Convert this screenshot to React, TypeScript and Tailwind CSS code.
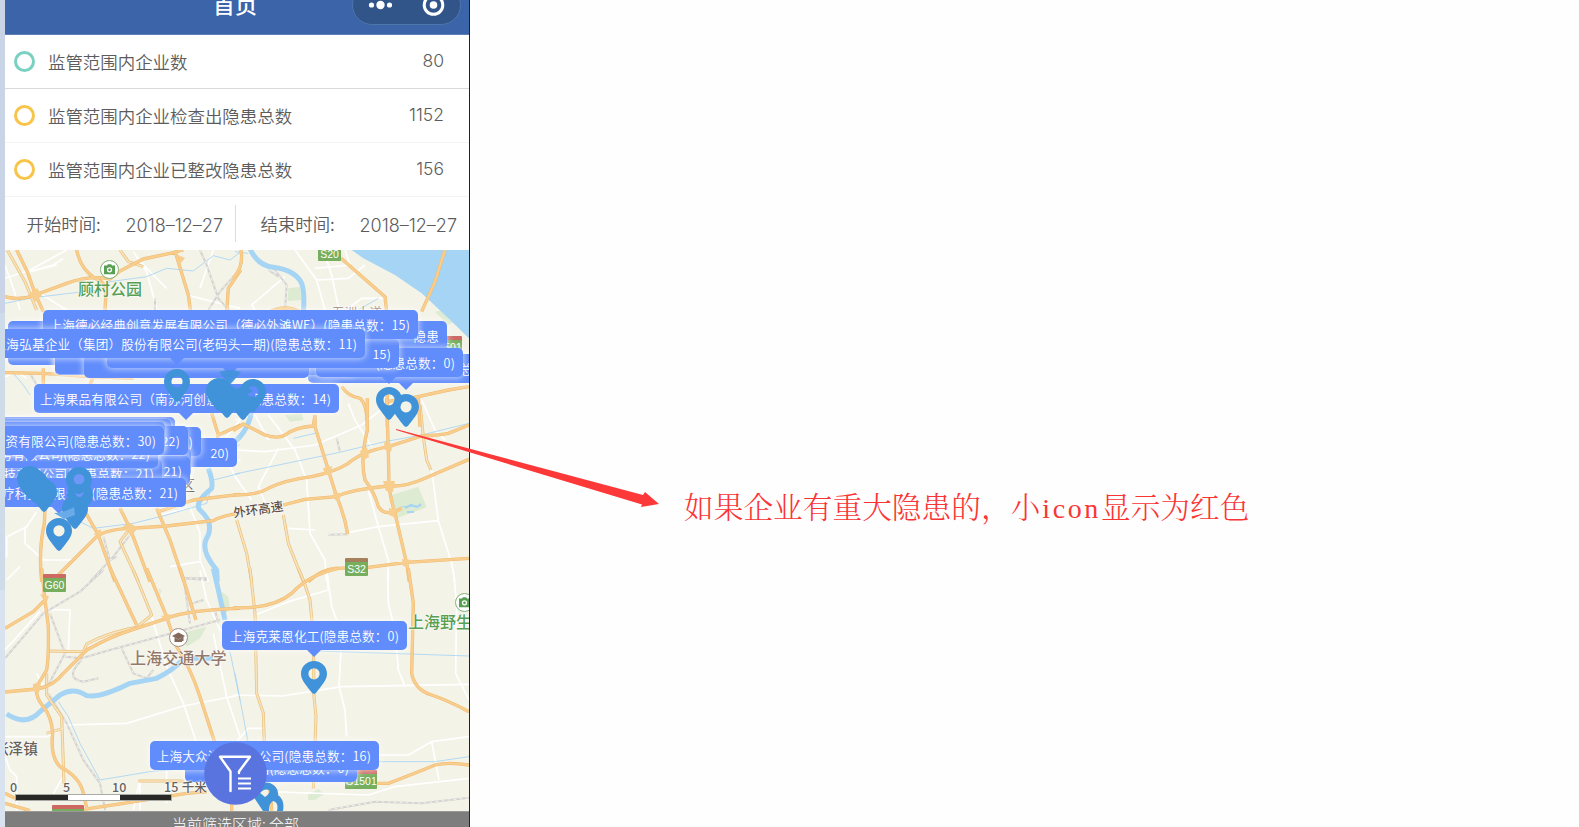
import type { ReactNode } from "react";

const ORANGE = "#f8ce8e";
const ORANGE_EDGE = "#f1b96f";
const WATER = "#a5d4f4";

type Tile = {
  origin: string;
  sea?: string;
  green?: string;
  white: string;
  blue: string;
  rail: string;
  pale?: string;
  river?: string;
  roads: string;
};

/* Road network, split in tiles drawn at three units per pixel. */
const tiles: Tile[] = [
  {
    origin: "translate(-5 -5) scale(.33333)",
    white:
      "M200 15L90 75L15 100M170 60L90 80L160 60L190 40M400 20L440 80L470 190M330 95L420 50L500 130M15 60L40 130L60 195M560 150L720 190M15 395L50 380L80 400M600 130L640 15M120 145L200 195",
    blue: "M15 175L100 158L200 146L290 136L330 110L440 95L500 70L580 78L640 32L690 45L720 22M40 385L70 420L90 450",
    rail: "M600 15L620 60L655 160L690 200M700 95L660 140L625 195M90 385L110 420M465 160L465 195",
    pale: "M22 15L75 110L110 195M360 15L385 50L430 65",
    roads:
      "M50 15L82 80L105 145L130 200M15 155Q60 168 105 150L200 115Q270 90 330 102L360 78L430 42L510 25L550 15M230 15Q240 70 285 100Q320 115 318 140L315 200M525 18Q550 100 565 150L572 200M722 75L685 130L680 200M15 383L130 385L270 395L400 400M130 370V420M280 395L270 420",
  },
  {
    origin: "translate(230 -5) scale(.33333)",
    sea: "M350 15L385 40L480 90L560 145L630 210L704 282V15Z",
    green: "M160 130L195 125L200 165L158 168ZM600 200L625 195L655 230L640 240Z",
    white:
      "M180 15L245 105L270 195M265 15L290 90L312 195M245 105L340 100L390 60M150 95L50 180L60 195M330 15L345 60L240 70M340 190L380 160L450 160",
    blue: "M0 20L40 25M370 195L430 160",
    rail: "M60 40L120 75L155 120L150 195M100 75L130 95",
    river: "M45 10Q65 60 115 67Q180 75 200 115Q210 145 205 200",
    roads:
      "M18 15C25 60 10 80 -5 100M318 40L450 155L455 200M630 15L600 110L560 200M105 200Q150 178 195 200M320 425Q340 455 375 460Q397 480 397 545M457 430V545M455 470L550 455L640 435L702 425M550 455L555 545",
  },
  {
    origin: "translate(-5 150) scale(.33333)",
    white:
      "M20 470V410L80 380L110 335M75 380L75 430L130 480L220 480M570 320L600 400L600 480L625 545M600 200L720 180M480 345L560 325M720 60L640 160L590 200M660 110L700 220L720 250M20 540L60 500M510 500L600 485",
    blue: "M170 330L280 385L400 370L500 345L620 310L640 240L720 220M650 150L720 135",
    rail: "M390 405L340 470L270 545M310 410L330 480L350 470M550 535L620 540",
    pale: "M390 385L360 425L415 545",
    river: "M625 205Q640 245 635 265Q580 310 600 330Q645 370 620 415Q600 450 650 510L652 545M720 110L690 140",
    roads:
      "M135 325L133 370Q115 450 125 545M175 525L290 410Q320 388 390 385L500 378L640 362Q670 345 720 340M255 335L295 405L345 545M360 325L390 385L450 545M470 325L510 420L552 545M475 335L580 300L720 283M635 40L655 105L722 75M655 105L640 180",
  },
  {
    origin: "translate(230 150) scale(.33333)",
    green: "M470 285L550 260L575 322L485 355ZM150 45L200 40L205 60L165 65Z",
    white:
      "M0 150L90 155L240 135L380 75L450 20M340 10L360 60L410 140M100 45L180 150L215 240L225 400L270 480L275 545M0 230L50 300M130 145L70 260L95 320M400 270L430 380L460 480L460 545M160 385L240 390M338 398L430 380L610 362L650 490L660 545M590 210L610 362M560 0L600 90L630 120M0 60L60 45L100 120",
    blue: "M0 222L300 160L450 125L560 105L702 70M175 115L240 100M500 320L560 318",
    rail: "M305 115L315 155M280 404L340 403",
    pale: "M555 15L565 110L575 180L588 210M145 345L160 430L205 545M5 360L35 460L50 545",
    river: "M55 -5Q50 80 5 120",
    roads:
      "M-5 92L25 72L90 105Q130 118 150 105Q180 82 235 78L240 45M240 45V80L280 210L305 290Q330 350 338 402M-5 284Q60 288 100 265Q150 240 230 230Q300 215 340 190Q380 155 460 140L560 108Q620 105 640 100L702 75M397 -5V90Q375 180 390 240Q420 280 430 320Q445 345 480 335L500 325M455 -5L460 150L462 260Q470 310 480 340L515 490L523 545M145 315L210 298L305 290Q340 270 460 258Q510 262 570 235L702 178M220 545Q260 508 300 505L400 502L515 487L702 475",
  },
  {
    origin: "translate(-5 320) scale(.33333)",
    green: "M545 190L620 170L600 205L560 230ZM665 65L685 80L690 115L670 140ZM475 55L485 60L480 75Z",
    white:
      "M195 465L380 460L550 408L720 375M15 500H140L190 475M455 140L500 290L550 400L590 520M640 190L680 380L720 500M130 118L210 120L205 240M15 240L120 125M15 560L30 600L50 620V720M500 600V700M420 630V720M600 0L620 90L660 180L720 200M110 310L130 350L100 360M400 720L420 630M150 690L200 600",
    blue: "M175 395L205 440L240 520L300 630L450 605M690 245L720 390M450 605L560 595",
    rail: "M310 0L240 65L130 130L15 265M150 130L195 250L145 345M195 260L245 265L330 240L570 175L660 150M245 270Q190 325 250 335L295 325M365 235L400 310L440 325L460 300M145 370L200 460L250 570L300 640L315 720M550 20L570 160M550 25H620M560 105L610 90M645 120L655 160",
    pale: "M140 310V375L185 440L192 640M145 243L250 245L260 222Q330 185 410 172L455 135L400 0M140 490L190 475M415 633H550",
    river: "M640 -5L655 60L675 150M20 432Q80 470 120 425L180 375Q220 350 260 377Q300 385 390 340L470 325Q520 300 545 272L580 265H640",
    roads:
      "M125 -5L135 90L145 170Q147 260 140 300L110 350Q105 380 130 410Q155 440 158 490Q150 560 180 590Q240 620 250 670L262 722M15 175L100 125L135 90M330 -5L410 165M440 -5L500 140L530 230Q570 290 600 380L645 520M540 -5L588 150M15 366L110 357Q160 350 190 310L260 240Q330 200 400 178L500 145Q560 120 720 115M225 722L370 700L560 670L620 665M15 670L45 685M15 700L90 722M695 600V722",
  },
  {
    origin: "translate(230 320) scale(.33333)",
    green: "M218 675L250 657L267 672L240 690H220Z",
    white:
      "M60 135L160 95L280 60L275 0L290 110L305 150M-5 375L140 378L320 350L702 343M318 240L312 350L330 420L335 500M458 0L460 100L480 180L490 300L510 350M655 0L665 100L662 310L702 390M430 555L520 555L590 515L702 500M590 515L612 630M100 665L400 675L480 650L702 625M0 520L40 475L90 475",
    blue: "M220 242L702 258M430 575L600 575L702 560M0 310L40 520",
    rail: "M280 720L420 695L560 700L702 683",
    pale: "M45 -5L60 130L65 370L85 430L88 520M190 -5L205 30L225 90L235 200L237 380L243 440L235 655",
    roads:
      "M-5 113Q110 118 170 70Q220 15 310 -5M520 -5L535 100L530 310Q540 360 590 375Q640 392 702 425M425 640H460Q540 610 600 585Q640 575 702 585M0 665L80 640M105 660L110 722",
  },
];

function Roads() {
  return (
    <svg className="absolute inset-0 h-full w-full" viewBox="0 0 464 561" fill="none" strokeLinejoin="round">
      <rect width="464" height="562" fill="#f4f3e8" />
      {tiles.map((t) => (
        <g key={t.origin} transform={t.origin}>
          {t.green && <path d={t.green} fill="#dcebd2" />}
          {t.sea && <path d={t.sea} fill={WATER} />}
          <path d={t.white} stroke="#fff" strokeWidth="5" />
          <path d={t.blue} stroke={WATER} strokeWidth="2.5" />
          <path d={t.rail} stroke="#d3d2d0" strokeWidth="6" />
          <path d={t.rail} stroke="#f1f0ea" strokeWidth="3" strokeDasharray="9 9" />
          {t.river && <path d={t.river} stroke={WATER} strokeWidth="15" />}
          {t.pale && <path d={t.pale} stroke="#eabf78" strokeWidth="9" />}
          {t.pale && <path d={t.pale} stroke="#f7e3bd" strokeWidth="5" />}
        </g>
      ))}
      {tiles.map((t) => (
        <g key={t.origin} transform={t.origin}>
          <path d={t.roads} stroke={ORANGE_EDGE} strokeWidth="10" />
          <path d={t.roads} stroke={ORANGE} strokeWidth="7" />
        </g>
      ))}
      <g fill={ORANGE}>
        <path d="M24 44L32 38L37 45L31 52ZM118 276L125 273L133 278L126 286ZM36 190L45 193L41 203ZM88 285L95 279L98 284ZM379 192L388 194L386 202L380 200ZM355 201L362 197L364 207L357 211ZM318 218L327 216L326 225L320 225ZM378 231L390 231L388 242L381 241ZM328 243L337 243L334 251L330 250ZM397 309L406 310L403 317L398 316ZM384 258L391 260L389 267L384 265ZM35 344L44 346L41 354ZM28 434L36 432L34 443L28 441ZM156 366L165 364L164 373ZM180 8L173 5L175 14Z" />
      </g>
      <path d="M400 258l6-3 6 2 4-3M402 262h7" stroke={WATER} strokeWidth="2" />
    </svg>
  );
}

function Shield({ pos, size, top, children }: { pos: string; size: string; top: string; children?: ReactNode }) {
  return (
    <div className={`absolute flex flex-col overflow-hidden rounded-[1px] ${pos} ${size}`}>
      <div className={`h-[4px] shrink-0 ${top}`} />
      <div className="flex flex-1 items-center justify-center bg-[#76ae5d] font-['Liberation_Sans',sans-serif] text-[10.5px] leading-none text-white">
        {children}
      </div>
    </div>
  );
}

function Label({ pos, tail, children }: { pos: string; tail?: string; children?: ReactNode }) {
  return (
    <div
      className={`absolute flex h-[29px] items-center justify-end rounded-[5px] bg-[#618cfb] pt-px pr-[8px] text-[12.6px] leading-none font-[350] tracking-[0.17px] whitespace-nowrap text-white shadow-[0_0_6px_1px_rgba(255,255,255,0.6)] ${pos}`}
    >
      {children}
      {tail && (
        <div className={`absolute top-[29px] h-0 w-0 border-x-[7px] border-t-[7px] border-x-transparent border-t-[#618cfb] ${tail}`} />
      )}
    </div>
  );
}

function Pin({ pos, solid = false }: { pos: string; solid?: boolean }) {
  return (
    <svg className={`absolute h-[33px] w-[26px] ${pos}`} viewBox="0 0 26 33" fill="#4093d8">
      <path
        fillRule="evenodd"
        d={
          "M13 0C5.8 0 0 5.6 0 12.8C0 20 6.5 25.5 10.9 31.8Q13 34 15.1 31.8C19.5 25.5 26 20 26 12.8C26 5.6 20.2 0 13 0Z" +
          (solid ? "" : "M13 7.2A5.6 5.6 0 1 1 13 18.4A5.6 5.6 0 1 1 13 7.2Z")
        }
      />
    </svg>
  );
}

function ParkIcon({ pos }: { pos: string }) {
  return (
    <svg className={`absolute h-[19px] w-[19px] ${pos}`} viewBox="0 0 19 19">
      <circle cx="9.5" cy="9.5" r="9" fill="#fff" stroke="#7fb275" />
      <path d="M4 5.500h3l.8-1.300h3.400l.8 1.300h3v8.800H4z" fill="#59a055" />
      <circle cx="9.5" cy="9.8" r="2" fill="#59a055" stroke="#fff" strokeWidth="1.3" />
    </svg>
  );
}

function MapText({ className, children }: { className: string; children: ReactNode }) {
  return (
    <div
      className={`absolute leading-none whitespace-nowrap [text-shadow:0_0_2px_#fff,0_0_2px_#fff,0_0_1px_#fff] ${className}`}
    >
      {children}
    </div>
  );
}

function CityMap() {
  return (
    <div className="relative h-[561px] overflow-hidden">
      <Roads />
      <ParkIcon pos="left-[95px] top-[10px]" />
      <MapText className="left-[73px] top-[30px] text-[16px] font-medium text-[#57a052]">顾村公园</MapText>
      <MapText className="left-[327px] top-[56px] text-[12.5px] text-[#95806f]">五洲大道</MapText>
      <MapText className="left-[175px] top-[227px] text-[15px] text-[#6b6560]">区</MapText>
      <MapText className="left-[228px] top-[253px] -rotate-[8deg] text-[12.6px] font-medium text-[#5d5048]">外环高速</MapText>
      <MapText className="left-[125px] top-[399px] text-[16.1px] font-medium text-[#93796a]">上海交通大学</MapText>
      <MapText className="-left-[11px] top-[491px] text-[14.6px] font-medium text-[#65615b]">张泽镇</MapText>
      <MapText className="left-[403px] top-[363px] text-[16px] font-medium text-[#57a052]">上海野生</MapText>
      <ParkIcon pos="left-[450px] top-[343px]" />
      <svg className="absolute left-[164px] top-[378px] h-[19px] w-[19px]" viewBox="0 0 19 19">
        <circle cx="9.5" cy="9.5" r="9" fill="#fff" stroke="#a09088" />
        <path d="M3 8l6.500-3.500L16 8l-1.500.8V13H13V9.600l-3.500 1.800z" fill="#84695b" />
        <path d="M5.500 9.500l4 2 3.500-1.800V14h-7.500z" fill="#84695b" />
      </svg>

      <Shield pos="left-[313px] -top-[7px]" size="h-[18px] w-[23px]" top="bg-[#cd6962]">S20</Shield>
      <Shield pos="left-[425px] top-[86px]" size="h-[18px] w-[32px]" top="bg-[#cd6962]">G1501</Shield>
      <Shield pos="left-[340px] top-[308px]" size="h-[18px] w-[23px]" top="bg-[#a4805d]">S32</Shield>
      <Shield pos="left-[38px] top-[324px]" size="h-[18px] w-[23px]" top="bg-[#cd6962]">G60</Shield>
      <Shield pos="left-[340px] top-[520px]" size="h-[19px] w-[32px]" top="bg-[#cd6962]">G1501</Shield>
      <Shield pos="left-[47px] top-[555px]" size="h-[18px] w-[32px]" top="bg-[#cd6962]" />

      {/* Northern cluster */}
      <Label pos="left-[3px] top-[71px] w-[439px]" tail="left-[20px]">隐患</Label>
      <Label pos="left-[3px] top-[86px] w-[200px]" />
      <Label pos="left-[303px] top-[104px] w-[185px]" tail="left-[91px]">总数</Label>
      <Label pos="left-[50px] top-[96px] w-[300px]" />
      <Label pos="left-[50px] top-[95px] w-[250px]" />
      <Label pos="left-[79px] top-[99px] w-[225px]" tail="left-[137px]" />
      <Label pos="left-[311px] top-[98px] w-[147px]" tail="left-[66px]">(隐患总数：0)</Label>
      <Label pos="left-[102px] top-[89px] w-[292px]" tail="left-[116px]">15)</Label>
      <Label pos="left-[38px] top-[60px] w-[375px]">上海德必经典创意发展有限公司（德必外滩WE）(隐患总数：15)</Label>
      <Label pos="-left-[30px] top-[79px] w-[390px]" tail="left-[195px]">上海弘基企业（集团）股份有限公司(老码头一期)(隐患总数：11)</Label>
      <Label pos="left-[29px] top-[134px] w-[305px]" tail="left-[145px]">上海果品有限公司（南苏河创意园）(隐患总数：14)</Label>
      <svg className="absolute left-[213px] top-[119px] h-[16px] w-[24px]" viewBox="0 0 24 16">
        <path d="M1 3Q12 -1 23 3L12 16Z" fill="#4093d8" fillOpacity=".85" />
      </svg>
      <Pin pos="left-[159px] top-[119px]" />
      <Pin pos="left-[201px] top-[128px]" solid />
      <Pin pos="left-[235px] top-[129px]" />
      <Pin pos="left-[209px] top-[135px]" solid />
      <Pin pos="left-[225px] top-[137px]" solid />
      <svg className="absolute left-[239px] top-[135px] h-[14px] w-[14px]" viewBox="0 0 14 14">
        <path d="M4 8Q9 8 11 3Q13.500 11 8 12Q4 12 4 8Z" fill="#618cfb" />
      </svg>
      <Pin pos="left-[371px] top-[137px]" />
      <Pin pos="left-[388px] top-[144px]" />

      {/* Western cluster */}
      <Label pos="left-[80px] top-[188px] w-[152px]">20)</Label>
      <Label pos="left-[40px] top-[177px] w-[156px]">)</Label>
      <Label pos="-left-[30px] top-[167px] w-[200px]" />
      <Label pos="-left-[30px] top-[169px] w-[196px]" />
      <Label pos="-left-[30px] top-[198px] w-[216px]" />
      <Label pos="-left-[30px] top-[206px] w-[215px]">21)</Label>
      <Label pos="-left-[30px] top-[209px] w-[187px]">环保科技有限公司(隐患总数：21)</Label>
      <Label pos="-left-[30px] top-[189px] w-[183px]" tail="left-[97px]">劳务有限公司(隐患总数：22)</Label>
      <Label pos="-left-[30px] top-[176px] w-[213px]">22)</Label>
      <Label pos="-left-[30px] top-[172px] w-[190px]" />
      <Label pos="-left-[30px] top-[176px] w-[189px]" tail="left-[48px]">资有限公司(隐患总数：30)</Label>
      <Label pos="-left-[30px] top-[228px] w-[211px]" tail="left-[77px]">医疗科技有限公司(隐患总数：21)</Label>
      <Pin pos="left-[12px] top-[216px]" solid />
      <Pin pos="left-[17px] top-[220px]" solid />
      <Pin pos="left-[26px] top-[229px]" solid />
      <Pin pos="left-[57px] top-[246px]" solid />
      <Pin pos="left-[62px] top-[232px]" solid />
      <Pin pos="left-[61px] top-[217px]" solid />
      <svg className="absolute left-[68px] top-[224px] h-[24px] w-[12px]" viewBox="0 0 12 24" fill="#6f97f8">
        <path d="M.5 5.500A5.500 5.500 0 0 1 11.500 5.500Q11 9 8 10Q4 11 2 9ZM2 19Q8 22 11 17Q10 23 6 23Q3 22 2 19Z" />
      </svg>
      <svg className="absolute left-[49px] top-[257px] h-[14px] w-[22px]" viewBox="0 0 22 14">
        <path d="M0 6Q10 6 20 0L21 8L10 12Z" fill="#69abe9" />
      </svg>
      <Pin pos="left-[41px] top-[268px]" />

      {/* Southern markers */}
      <Label pos="left-[217px] top-[371px] w-[185px]" tail="left-[85px]">上海克莱恩化工(隐患总数：0)</Label>
      <Pin pos="left-[296px] top-[411px]" />
      <Label pos="left-[180px] top-[503px] w-[172px]">上海金山(隐患总数：0)</Label>
      <Label pos="left-[145px] top-[491px] w-[229px]">上海大众汽车有限公司(隐患总数：16)</Label>
      <svg className="absolute left-[246px] top-[530px] h-[31px] w-[36px]" viewBox="0 0 36 31">
        <path d="M6 6Q12 1 19 3Q28 7 27 15Q34 20 32 31H26Q28 22 22 21Q18 23 18 31H12L2 16L8 12L14 17Q20 13 18 10Q13 8 9 13Z" fill="#4093d8" />
      </svg>

      {/* Scale */}
      <div className="absolute left-[10px] top-[532px] text-[12.5px] leading-none font-medium tracking-[0.2px] text-[#64625e]">
        <MapText className="-left-[5px] -top-px">0</MapText>
        <MapText className="left-[48px] -top-px">5</MapText>
        <MapText className="left-[97px] -top-px">10</MapText>
        <MapText className="left-[149px] -top-px">15 千米</MapText>
      </div>
      <div className="absolute left-[10px] top-[544px] flex h-[7px] w-[157px] border border-[#a9a9a6] bg-white">
        <div className="w-[52px] bg-[#282827]" />
        <div className="w-[52px] bg-white" />
        <div className="flex-1 bg-[#282827]" />
      </div>

      {/* Filter button */}
      <svg className="absolute left-[199px] top-[492px] h-[63px] w-[63px]" viewBox="0 0 63 63" fill="none">
        <circle cx="31.500" cy="31.500" r="31.300" fill="#5a74df" />
        <g stroke="#fff" strokeWidth="2.400" strokeLinecap="round" strokeLinejoin="round">
          <path d="M26.500 49V29.500L16 14.800H46L35 29.500V31" />
          <path d="M34 36.500H47M34 41.500H47M34 46.500H47" strokeLinecap="butt" strokeWidth="2.200" />
        </g>
      </svg>
    </div>
  );
}

function StatRow({ ring, label, value, line }: { ring: string; label: string; value: string; line: string }) {
  return (
    <div className={`flex h-[54px] items-center border-b pr-[25px] pl-[9px] ${line}`}>
      <span className={`h-[21px] w-[21px] rounded-full border-[3.5px] ${ring}`} />
      <span className="ml-[13px] flex-1 pt-px text-[17.45px]">{label}</span>
      <span className="font-['Inter',sans-serif] text-[17.5px]">{value}</span>
    </div>
  );
}

function DateField({ label, value, inset }: { label: string; value: string; inset: string }) {
  return (
    <div className={`flex h-full items-center justify-end ${inset}`}>
      <span className="w-[99px] pt-px text-[17.4px]">{label}</span>
      <span className="mt-[4px] font-['Inter',sans-serif] text-[18px]">{value}</span>
    </div>
  );
}

export default function App() {
  return (
    <div className="flex h-[827px] w-full overflow-hidden bg-[#fefefe] font-['Noto_Sans_CJK_SC',sans-serif]">
      <div className="flex w-[5px] flex-col">
        <div className="h-[313px] bg-[#cad4e7]" />
        <div className="h-[277px] bg-[#cedbe9]" />
        <div className="flex-1 bg-[#d9e3f0]" />
      </div>

      <div className="flex w-[465px] flex-col border-r border-[#222]">
        <header className="relative flex h-[35px] shrink-0 justify-center overflow-hidden border-b border-[#5c7fb8] bg-[#3b64a9]">
          <h1 className="-mt-[8px] pr-[4px] text-[22px] leading-[22px] font-medium text-white">首页</h1>
          <svg className="absolute -top-[15px] right-[8px] h-[40px] w-[109px]" viewBox="0 0 109 40">
            <rect x=".5" y=".5" width="108" height="39" rx="19.500" fill="#315589" stroke="#4f75ad" />
            <g fill="#fff">
              <circle cx="19.500" cy="20" r="2.600" />
              <circle cx="28.500" cy="20" r="4.200" />
              <circle cx="37.500" cy="20" r="2.600" />
              <circle cx="81.500" cy="20" r="3.800" />
            </g>
            <circle cx="81.500" cy="20" r="9.300" fill="none" stroke="#fff" strokeWidth="3" />
          </svg>
        </header>

        <section className="shrink-0 bg-white font-[350] text-[#5c5c5c]">
          <StatRow ring="border-[#7bd1c1]" label="监管范围内企业数" value="80" line="border-[#d9d9d9]" />
          <StatRow ring="border-[#f7c44c]" label="监管范围内企业检查出隐患总数" value="1152" line="border-[#f4f4f0]" />
          <StatRow ring="border-[#f7c44c]" label="监管范围内企业已整改隐患总数" value="156" line="border-[#f4f4f0]" />
          <div className="flex h-[53px] items-center">
            <DateField label="开始时间:" value="2018–12–27" inset="w-[230px] pr-[12px]" />
            <div className="h-[37px] w-px bg-[#dcdcdc]" />
            <DateField label="结束时间:" value="2018–12–27" inset="flex-1 pr-[12px]" />
          </div>
        </section>

        <CityMap />

        <footer className="flex h-[16px] shrink-0 justify-center overflow-hidden border-t border-[#999] bg-[#7d7d7d]">
          <span className="pt-[3px] pr-[3px] text-[15px] leading-[18px] font-light whitespace-nowrap text-white">当前筛选区域: 全部</span>
        </footer>
      </div>

      <main className="relative flex-1">
        <svg className="absolute -left-[75px] top-[425px] h-[85px] w-[270px]" viewBox="395 425 270 85">
          <path d="M396 429L643 495L645 492L659 504L641 507L642 504.500L396 430Z" fill="#fd3838" />
        </svg>
        <p className="pt-[485px] pl-[214px] font-['Noto_Serif_CJK_SC','Liberation_Serif',serif] text-[29.6px] leading-[40px] font-light tracking-[0.1px] whitespace-nowrap text-[#fb3434]">
          如果企业有重大隐患的，小
          <span className="pl-[2px] font-['Liberation_Serif',serif] text-[28px] tracking-[2.6px]">icon</span>
          显示为红色
        </p>
      </main>
    </div>
  );
}
